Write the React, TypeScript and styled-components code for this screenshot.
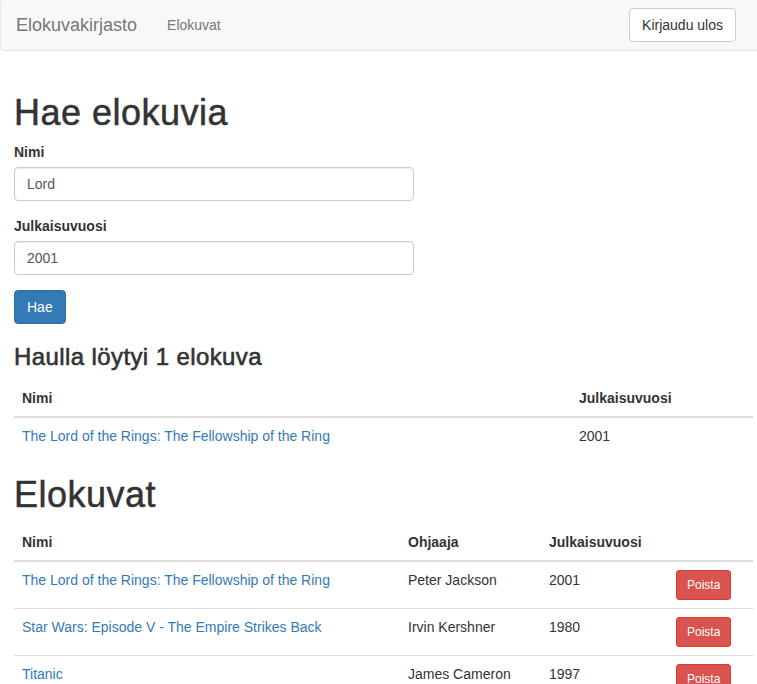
import React from "react";
import styled, { createGlobalStyle } from "styled-components";

const GlobalStyle = createGlobalStyle`
  html, body {
    margin: 0;
    padding: 0;
    background: #fff;
    overflow: hidden;
  }
  body {
    font-family: "Liberation Sans", Arial, Helvetica, sans-serif;
    font-size: 14px;
    line-height: 20px;
    color: #333;
  }
  * { box-sizing: border-box; }
`;

const Page = styled.div`
  width: 767px;
`;

const Navbar = styled.nav`
  display: flex;
  align-items: center;
  box-sizing: content-box;
  height: 50px;
  margin-top: -1px;
  background: #f8f8f8;
  border: 1px solid #e7e7e7;
  border-radius: 4px;
  padding-right: 30px;
`;

const Brand = styled.a`
  padding: 15px;
  font-size: 18px;
  line-height: 20px;
  color: #777;
  text-decoration: none;
`;

const NavLink = styled.a`
  padding: 15px;
  font-size: 14px;
  line-height: 20px;
  color: #777;
  text-decoration: none;
`;

const Spacer = styled.div`
  flex: 1;
`;

const Button = styled.button<{ $variant: "default" | "primary" | "danger"; $small?: boolean }>`
  display: inline-block;
  font-family: inherit;
  font-size: ${(p) => (p.$small ? "12px" : "14px")};
  line-height: ${(p) => (p.$small ? "18px" : "20px")};
  padding: ${(p) => (p.$small ? "5px 10px" : "6px 12px")};
  border-radius: ${(p) => (p.$small ? "3px" : "4px")};
  border: 1px solid
    ${(p) => (p.$variant === "primary" ? "#2e6da4" : p.$variant === "danger" ? "#d43f3a" : "#ccc")};
  background: ${(p) => (p.$variant === "primary" ? "#337ab7" : p.$variant === "danger" ? "#d9534f" : "#fff")};
  color: ${(p) => (p.$variant === "default" ? "#333" : "#fff")};
  cursor: pointer;
  white-space: nowrap;
`;

const Main = styled.main`
  padding: 22px 14px 0 14px;
`;

const Title = styled.h1<{ $section?: boolean }>`
  font-size: 36px;
  font-weight: 500;
  line-height: 1.1;
  letter-spacing: 0.5px;
  -webkit-text-stroke: 0.5px #333;
  margin: ${(p) => (p.$section ? "21px 0 9px" : "20px 0 9px")};
`;

const Subtitle = styled.h3`
  font-size: 24px;
  font-weight: 500;
  line-height: 1.1;
  letter-spacing: 0.4px;
  -webkit-text-stroke: 0.6px #333;
  margin: 20px 0 10px;
`;

const FormGroup = styled.div`
  margin-bottom: 15px;
`;

const Label = styled.label`
  display: block;
  font-weight: bold;
  margin-bottom: 5px;
  line-height: 20px;
`;

const Input = styled.input`
  display: block;
  width: 400px;
  height: 34px;
  padding: 6px 12px;
  font-family: inherit;
  font-size: 14px;
  line-height: 20px;
  color: #555;
  background: #fff;
  border: 1px solid #ccc;
  border-radius: 4px;
  box-shadow: inset 0 1px 1px rgba(0, 0, 0, 0.075);
  outline: none;
`;

const Table = styled.table`
  width: 100%;
  border-collapse: collapse;
  border-spacing: 0;
  margin-bottom: 20px;
`;

const Col = styled.col<{ $width?: number }>`
  width: ${(p) => (p.$width ? `${p.$width}px` : "auto")};
`;

const Th = styled.th`
  text-align: left;
  padding: 8px;
  line-height: 20px;
  font-weight: bold;
  vertical-align: bottom;
  border-bottom: 2px solid #ddd;
`;

const Td = styled.td`
  padding: 8px;
  line-height: 20px;
  vertical-align: top;
  border-top: 1px solid #ddd;
`;

const Link = styled.a`
  color: #337ab7;
  text-decoration: none;
`;

const movies = [
  { name: "The Lord of the Rings: The Fellowship of the Ring", director: "Peter Jackson", year: 2001 },
  { name: "Star Wars: Episode V - The Empire Strikes Back", director: "Irvin Kershner", year: 1980 },
  { name: "Titanic", director: "James Cameron", year: 1997 },
];

export default function App() {
  return (
    <Page>
      <GlobalStyle />
      <Navbar>
        <Brand href="#">Elokuvakirjasto</Brand>
        <NavLink href="#">Elokuvat</NavLink>
        <Spacer />
        <Button $variant="default" type="button">Kirjaudu ulos</Button>
      </Navbar>
      <Main>
        <Title>Hae elokuvia</Title>
        <form onSubmit={(e) => e.preventDefault()}>
          <FormGroup>
            <Label htmlFor="nimi">Nimi</Label>
            <Input id="nimi" type="text" defaultValue="Lord" />
          </FormGroup>
          <FormGroup>
            <Label htmlFor="vuosi">Julkaisuvuosi</Label>
            <Input id="vuosi" type="text" defaultValue="2001" />
          </FormGroup>
          <Button $variant="primary" type="submit">Hae</Button>
        </form>

        <Subtitle>Haulla löytyi 1 elokuva</Subtitle>
        <Table>
          <colgroup>
            <Col $width={557} />
            <Col />
          </colgroup>
          <thead>
            <tr>
              <Th>Nimi</Th>
              <Th>Julkaisuvuosi</Th>
            </tr>
          </thead>
          <tbody>
            <tr>
              <Td><Link href="#">The Lord of the Rings: The Fellowship of the Ring</Link></Td>
              <Td>2001</Td>
            </tr>
          </tbody>
        </Table>

        <Title $section>Elokuvat</Title>
        <Table>
          <colgroup>
            <Col $width={386} />
            <Col $width={141} />
            <Col $width={127} />
            <Col />
          </colgroup>
          <thead>
            <tr>
              <Th>Nimi</Th>
              <Th>Ohjaaja</Th>
              <Th>Julkaisuvuosi</Th>
              <Th></Th>
            </tr>
          </thead>
          <tbody>
            {movies.map((m) => (
              <tr key={m.name}>
                <Td><Link href="#">{m.name}</Link></Td>
                <Td>{m.director}</Td>
                <Td>{m.year}</Td>
                <Td><Button $variant="danger" $small type="button">Poista</Button></Td>
              </tr>
            ))}
          </tbody>
        </Table>
      </Main>
    </Page>
  );
}
